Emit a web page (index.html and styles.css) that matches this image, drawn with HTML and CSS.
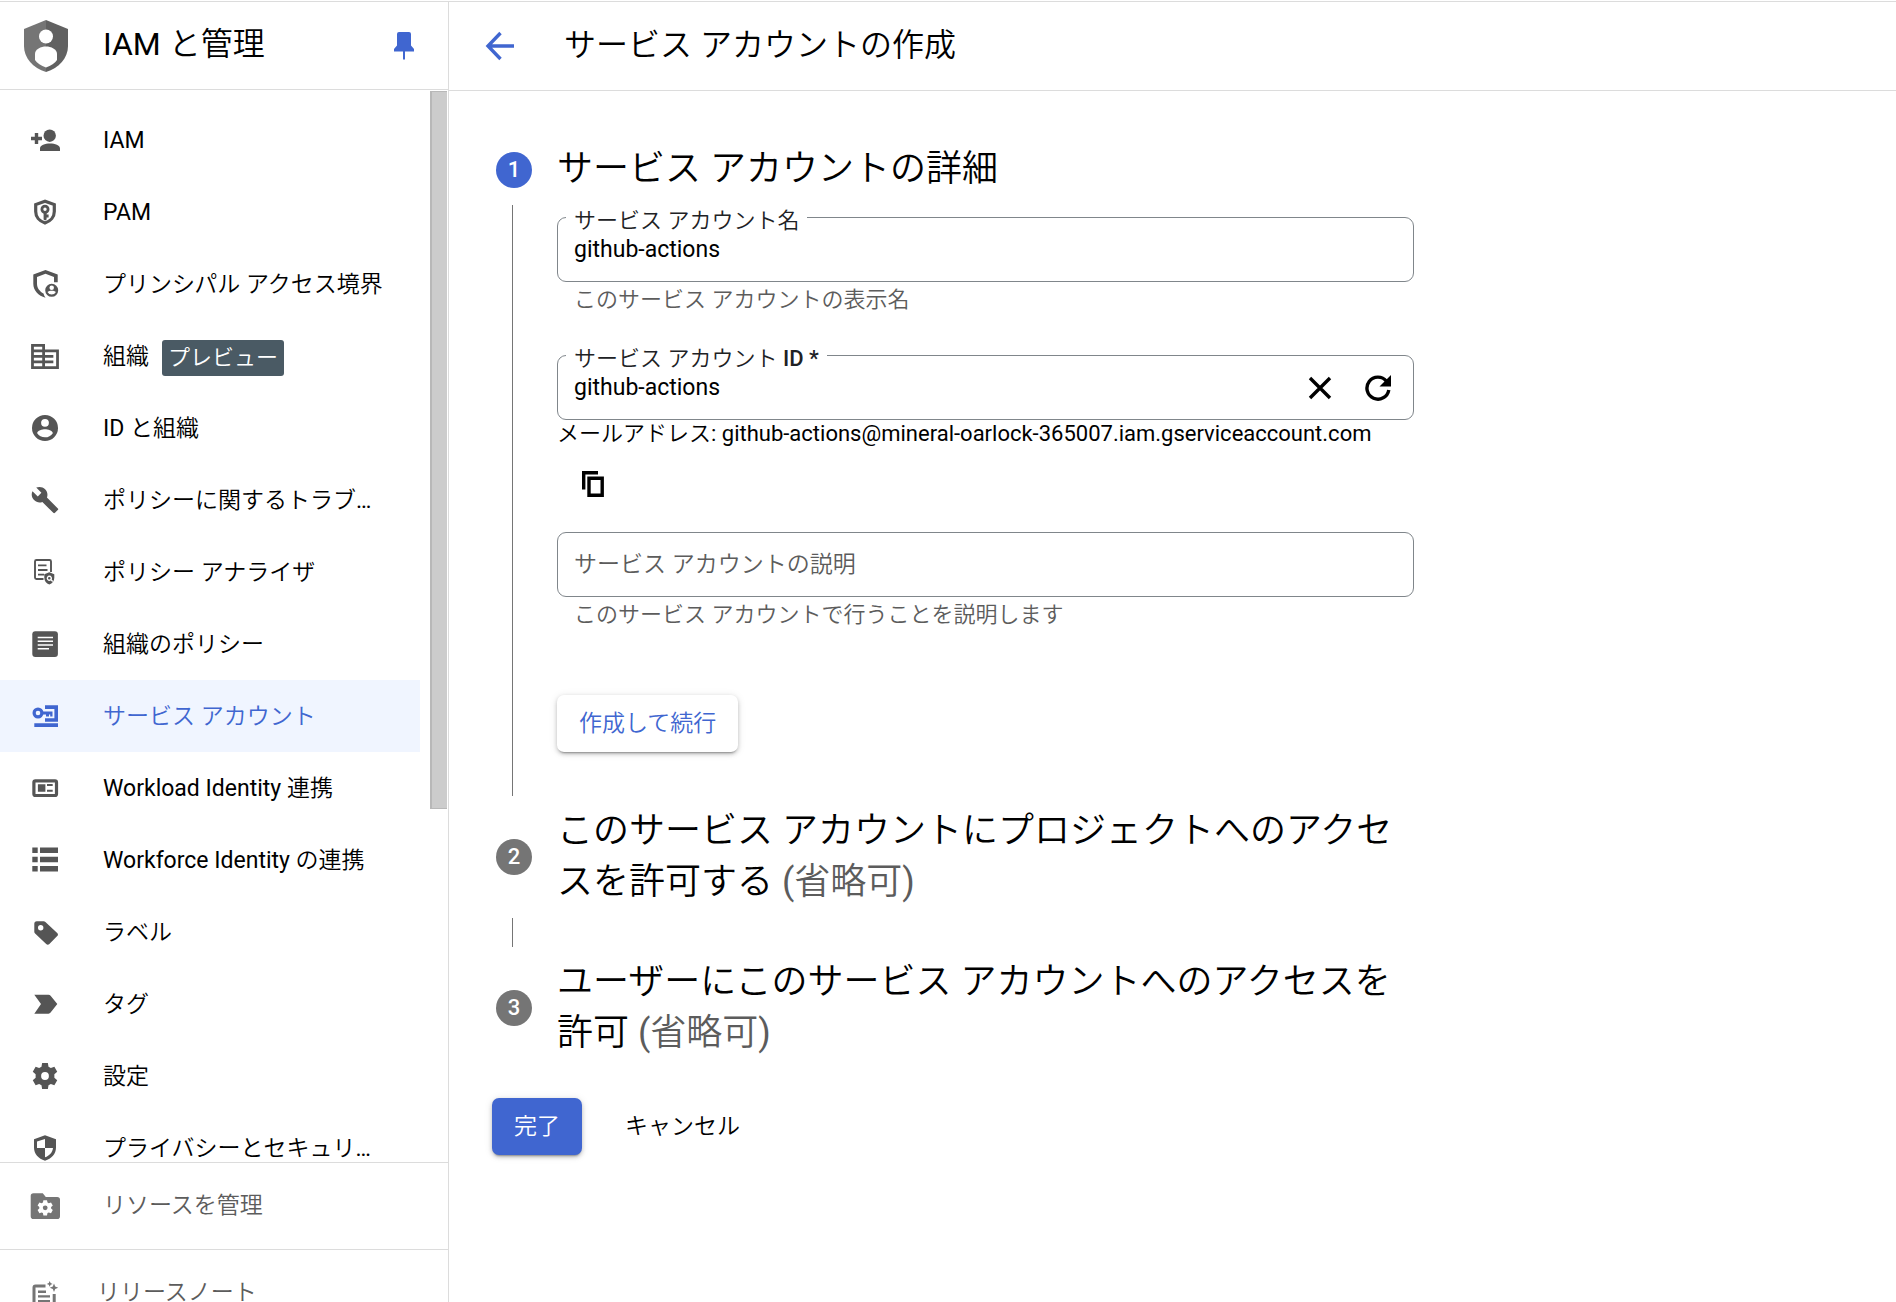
FILE: index.html
```html
<!DOCTYPE html>
<html lang="ja">
<head>
<meta charset="utf-8">
<meta name="viewport" content="width=device-width, initial-scale=1">
<title>サービス アカウントの作成</title>
<link rel="stylesheet" href="styles.css">
</head>
<body>
<div class="app">
  <aside class="sidebar">
    <div class="sidebar-header">
      <svg class="product-logo" viewBox="0 0 44 52" aria-hidden="true">
        <path fill="#757575" d="M22 0 0 9v17c0 12 9 22 22 26z"/>
        <path fill="#616161" d="M22 0l22 9v17c0 12-9 22-22 26z"/>
        <circle cx="22" cy="16.500" r="7" fill="#fff"/>
        <path fill="#fff" d="M11 34c0-5 6-7.500 11-7.500S33 29 33 34v6c-2 3-6 5.500-11 7.500-5-2-9-4.500-11-7.500z"/>
      </svg>
      <h2 class="product-name">IAM と管理</h2>
      <button class="icon-button pin" type="button" aria-label="固定">
        <svg width="20" height="28" viewBox="0 0 20 28"><path fill="currentColor" d="M5 0h10a2 2 0 0 1 2 2v11.500l3 3.500v2.500h-9V27l-1 1-1-1v-7.500H0V17l3-3.500V2a2 2 0 0 1 2-2z"/></svg>
      </button>
    </div>

    <div class="nav-area">
      <nav class="nav">
        <a class="nav-item" href="#"><svg class="icon" viewBox="0 0 32 32"><path d="M5.800 9h3.400v3.800H13v3.400H9.200V20H5.800v-3.800H2v-3.400h3.800zM11 27v-2.500c0-3.500 5-5 10-5s10 1.500 10 5V27z"/><circle cx="20.700" cy="11.700" r="6.200"/></svg><span class="nav-label">IAM</span></a>
        <a class="nav-item" href="#"><svg class="icon" viewBox="0 0 32 32"><path class="line" stroke-width="3.200" d="M16 5.200 6.700 8.600v7c0 5.200 3.600 9.700 9.300 11.400 5.700-1.700 9.300-6.200 9.300-11.400v-7z"/><circle class="line" cx="16" cy="13.300" r="3.100" stroke-width="2.800"/><path d="M14.600 16.500h3v2h2v3h-2v2l-1.500 1-1.500-1z"/></svg><span class="nav-label">PAM</span></a>
        <a class="nav-item" href="#"><svg class="icon" viewBox="0 0 32 32"><path d="M16.500 2 4.300 6.500v9.300c0 6.500 5 12 12.200 14-1-1.500-1.600-2.700-2-4.300C10.700 23.500 8 20 8 15.800V9l8.500-3.200L25 9v5.300h3.700V6.500z"/><path fill-rule="evenodd" d="M22.700 15.800a6.500 6.500 0 1 1 0 13 6.500 6.500 0 0 1 0-13zm0 1.800a2.200 2.200 0 1 0 0 4.500 2.200 2.200 0 0 0 0-4.500zm-4.200 6.500c1 1.700 2.500 2.500 4.200 2.500s3.200-.8 4.200-2.500c-1-1-2.500-1.400-4.200-1.400s-3.200.4-4.200 1.400z"/></svg><span class="nav-label">プリンシパル アクセス境界</span></a>
        <a class="nav-item" href="#"><svg class="icon" viewBox="0.500 0.200 23 23"><path d="M12 7V3H2v18h20V7H12zM10 19H4v-2h6v2zm0-4H4v-2h6v2zm0-4H4V9h6v2zm0-4H4V5h6v2zm10 12h-8v-2h2v-2h-2v-2h2v-2h-2V9h8v10zm-2-8h-4v2h4v-2zm0 4h-4v2h4v-2z"/></svg><span class="nav-label">組織</span><span class="badge">プレビュー</span></a>
        <a class="nav-item" href="#"><svg class="icon" viewBox="-0.300 -0.300 24.600 24.600"><path d="M12 2a10 10 0 1 0 0 20 10 10 0 0 0 0-20zm0 3a3 3 0 1 1 0 6 3 3 0 0 1 0-6zm0 14.200c-2.500 0-4.700-1.300-6-3.200 0-2 4-3.100 6-3.100s6 1.100 6 3.100a7.200 7.200 0 0 1-6 3.200z"/></svg><span class="nav-label">ID と組織</span></a>
        <a class="nav-item" href="#"><svg class="icon" viewBox="-1.300 -1.300 26.600 26.600"><path d="M22.700 19l-9.100-9.100c.9-2.300.4-5-1.500-6.900-2-2-5-2.400-7.400-1.300L9 6 6 9 1.600 4.700C.4 7.100.9 10.100 2.900 12.100c1.900 1.900 4.600 2.400 6.900 1.500l9.100 9.100c.4.400 1 .4 1.400 0l2.300-2.300c.5-.4.5-1.100.1-1.400z"/></svg><span class="nav-label">ポリシーに関するトラブルシューティング</span></a>
        <a class="nav-item" href="#"><svg class="icon" viewBox="0 0 32 32"><path class="line" stroke-width="1.900" d="M14.500 23H7.500A1.500 1.500 0 0 1 6 21.500v-16A1.500 1.500 0 0 1 7.500 4h13A1.500 1.500 0 0 1 22 5.500V16M9 9.400h8.500M9 14h9.500M9 18.600h6"/><path fill-rule="evenodd" d="m20.300 16.200 5 2v3.600c0 3.200-2 5.800-5 6.800-3-1-5-3.600-5-6.800v-3.600zm0 3.400a2.700 2.700 0 1 0 1.500 5l1.500 1.400.9-.9-1.500-1.500a2.700 2.700 0 0 0-2.400-4zm0 1.400a1.300 1.300 0 1 1 0 2.600 1.300 1.300 0 0 1 0-2.600z"/></svg><span class="nav-label">ポリシー アナライザ</span></a>
        <a class="nav-item" href="#"><svg class="icon" viewBox="0 0 32 32"><rect x="3.300" y="3.300" width="25.600" height="25.600" rx="3"/><path stroke="#fff" stroke-width="1.600" d="M8.700 9.500h15.300M8.700 13.300h15.300M8.700 17h15.300M8.700 20.800h11.300"/></svg><span class="nav-label">組織のポリシー</span></a>
        <a class="nav-item selected" href="#" aria-current="page"><svg class="icon" viewBox="0 0 32 32"><path d="M16 5.300h13v16.500H16v-3.600h9.400V9H16zM5.300 23.300H29V27H5.300z"/><circle class="line" cx="9" cy="13" r="3.900" stroke-width="3.200"/><path d="M12.500 11.400h11v5h-2.300v-1.800H20v1.800h-3v-1.800h-4.500z"/></svg><span class="nav-label">サービス アカウント</span></a>
        <a class="nav-item" href="#"><svg class="icon" viewBox="0 0 32 32"><rect class="line" x="4.900" y="8.900" width="22.600" height="14.600" rx="1.500" stroke-width="3.200"/><path d="M8.900 12.300h7.500v7.400H8.900zM18 12h5.700v1.900H18zM18 17.800h5.700v1.900H18z"/></svg><span class="nav-label">Workload Identity 連携</span></a>
        <a class="nav-item" href="#"><svg class="icon" viewBox="0 0 32 32"><path d="M3.300 3.600h5.400v5.400H3.300zM11 3.600h18v5.400H11zM3.300 12.800h5.400v5.400H3.300zM11 12.800h18v5.400H11zM3.300 22h5.400v5.400H3.300zM11 22h18v5.400H11z"/></svg><span class="nav-label">Workforce Identity の連携</span></a>
        <a class="nav-item" href="#"><svg class="icon" viewBox="0 0 32 32"><path fill-rule="evenodd" d="M7.800 5.300h6.800c.7 0 1.300.3 1.800.8l11.800 10.800c1 1 1 2.200 0 3.200l-7.800 7.800c-1 1-2.200 1-3.200 0L6.100 17.500c-.5-.5-.8-1.100-.8-1.800V7.800a2.500 2.500 0 0 1 2.500-2.500zM11.700 9a2.700 2.700 0 1 0 0 5.400 2.700 2.700 0 0 0 0-5.400z"/></svg><span class="nav-label">ラベル</span></a>
        <a class="nav-item" href="#"><svg class="icon" viewBox="0 0 32 32"><path d="M5.300 6.700h14.200c.9 0 1.600.4 2.100 1.100L28.300 16l-6.700 8.600c-.5.700-1.200 1.100-2.100 1.100H5.300L12 16z"/></svg><span class="nav-label">タグ</span></a>
        <a class="nav-item" href="#"><svg class="icon" viewBox="-0.300 -0.300 24.600 24.600"><path fill-rule="evenodd" d="M9.800 2h4.400l.5 2.900 1.800 1 2.700-1 2.200 3.800-2.200 1.900v2.800l2.200 1.900-2.200 3.800-2.700-1-1.800 1-.5 2.900H9.800l-.5-2.900-1.800-1-2.700 1-2.200-3.800 2.200-1.900v-2.800L2.600 8.700l2.200-3.800 2.700 1 1.800-1zM12 9a3 3 0 1 0 0 6 3 3 0 0 0 0-6z"/></svg><span class="nav-label">設定</span></a>
        <a class="nav-item" href="#"><svg class="icon" viewBox="0 0 32 32"><path fill-rule="evenodd" d="M16 3.300 5 7.200v8.300c0 6.200 4.400 11.300 11 13.200 6.600-1.900 11-7 11-13.200V7.200zm0 3.600v9.100h8c-.4 4.300-3.600 7.800-8 9.300V16H8V9.500z"/></svg><span class="nav-label">プライバシーとセキュリティ</span></a>
      </nav>
      <div class="scroll-track"><div class="scroll-thumb"></div></div>
    </div>

    <div class="sidebar-footer">
      <a class="footer-item" href="#"><svg class="icon" viewBox="0 0 32 32"><path d="M4.500 3.300h9.300l3 3.600h11.400A2.800 2.800 0 0 1 31 9.700v16.500a2.800 2.800 0 0 1-2.800 2.800H4.500a2.800 2.800 0 0 1-2.800-2.800V6.100a2.800 2.800 0 0 1 2.800-2.800z"/><path fill="#fff" fill-rule="evenodd" d="M14.400 10.200h3.600l.5 2.300 1.300.7 2.200-.8 1.800 3.100-1.700 1.500v1.600l1.700 1.500-1.800 3.100-2.200-.8-1.300.7-.5 2.300h-3.600l-.5-2.300-1.300-.7-2.200.8-1.800-3.100 1.700-1.500V17l-1.700-1.500 1.800-3.100 2.200.8 1.300-.7zm1.800 5.200a2.400 2.400 0 1 0 0 4.800 2.400 2.400 0 0 0 0-4.800z"/></svg><span>リソースを管理</span></a>
      <a class="footer-item release-notes" href="#"><svg class="icon" viewBox="0 0 32 32"><path class="line" stroke-width="3" d="M16.500 9H6.500A1.500 1.500 0 0 0 5 10.500V29M25.200 17v12"/><path d="M9 13.500h8v2.400H9zM9 18.200h12v2.400H9zM9 23h12v2.400H9zM20.700 4l.9 2 2 .9-2 .9-.9 2-.9-2-2-.9 2-.9zM25 6.500l1.200 3 3 1.200-3 1.200-1.200 3-1.200-3-3-1.200 3-1.200z"/></svg><span>リリースノート</span></a>
    </div>
  </aside>

  <main class="main">
    <header class="page-header">
      <a class="back" href="#" aria-label="戻る">
        <svg width="30" height="30" viewBox="0 0 30 30"><path fill="none" stroke="currentColor" stroke-width="3.400" d="M29 15H3.500M15.500 2 3 15l12.500 13"/></svg>
      </a>
      <h1 class="page-title">サービス アカウントの作成</h1>
    </header>

    <form class="form">
      <ol class="steps">
        <li class="step">
          <span class="step-number active">1</span>
          <h3 class="step-title">サービス アカウントの詳細</h3>
          <span class="step-line"></span>
          <div class="step-body">
            <div class="field">
              <label class="field-label" for="sa-name">サービス アカウント名</label>
              <input class="field-input" id="sa-name" type="text" value="github-actions">
            </div>
            <p class="hint">このサービス アカウントの表示名</p>

            <div class="field">
              <label class="field-label" for="sa-id">サービス アカウント ID *</label>
              <input class="field-input" id="sa-id" type="text" value="github-actions">
              <button class="field-action" type="button" aria-label="クリア">
                <svg width="24" height="24" viewBox="0 0 24 24"><path fill="none" stroke="currentColor" stroke-width="3.400" d="M2 2l20 20M22 2 2 22"/></svg>
              </button>
              <button class="field-action" type="button" aria-label="再生成">
                <svg width="26" height="26" viewBox="0 0 26 26"><path fill="none" stroke="currentColor" stroke-width="3.400" d="M21.500 6.200A11 11 0 1 0 23.800 15"/><path fill="currentColor" d="M26 0v11.500H14.500z"/></svg>
              </button>
            </div>
            <p class="email">メールアドレス: github-actions@mineral-oarlock-365007.iam.gserviceaccount.com</p>
            <button class="copy" type="button" aria-label="コピー">
              <svg width="22" height="26" viewBox="0 0 22 26"><path fill="none" stroke="currentColor" stroke-width="3.400" d="M1.700 18.500V1.700H16M7 7.200h13.200v17H7z"/></svg>
            </button>

            <div class="field">
              <input class="field-input" type="text" aria-label="サービス アカウントの説明" placeholder="サービス アカウントの説明">
            </div>
            <p class="hint">このサービス アカウントで行うことを説明します</p>

            <button class="button raised create" type="button">作成して続行</button>
          </div>
        </li>
        <li class="step">
          <span class="step-number">2</span>
          <h3 class="step-title">このサービス アカウントにプロジェクトへのアクセスを許可する <span class="optional">(省略可)</span></h3>
          <span class="step-line"></span>
        </li>
        <li class="step">
          <span class="step-number">3</span>
          <h3 class="step-title">ユーザーにこのサービス アカウントへのアクセスを許可 <span class="optional">(省略可)</span></h3>
        </li>
      </ol>
      <div class="actions">
        <button class="button raised primary" type="submit">完了</button>
        <button class="button" type="button">キャンセル</button>
      </div>
    </form>
  </main>
</div>
</body>
</html>
```

FILE: styles.css
```css
:root {
  --blue: #4066d0;
  --border: #dcdcdc;
  --outline: #80868b;
  --muted: #5c5c5c;
  --font: Roboto, "Noto Sans CJK JP DemiLight", "Noto Sans CJK JP Light", "Noto Sans CJK JP", sans-serif;
}

* {
  box-sizing: border-box;
}

body {
  margin: 0;
  font: 400 23px/28px var(--font);
  color: #000;
  background: #fff;
}

h1, h2, h3, p, ol {
  margin: 0;
  padding: 0;
  font-weight: 400;
}

button, input {
  font: inherit;
  color: inherit;
}

button {
  padding: 0;
  border: 0;
  background: none;
  cursor: pointer;
}

a {
  color: inherit;
  text-decoration: none;
}

svg {
  display: block;
}

.app {
  display: flex;
  height: 100vh;
  padding-top: 1px;
  overflow: hidden;
}

/* Sidebar */

.sidebar {
  display: flex;
  flex: none;
  flex-direction: column;
  width: 449px;
  border-top: 1px solid var(--border);
  border-right: 1px solid var(--border);
}

.sidebar-header {
  display: flex;
  flex: none;
  align-items: center;
  height: 88px;
  padding: 0 34px 0 24px;
  border-bottom: 1px solid var(--border);
}

.product-logo {
  width: 44px;
  height: 52px;
}

.product-name {
  flex: 1;
  padding: 0 0 3px 35px;
  font-size: 32px;
  line-height: 40px;
}

.pin {
  color: var(--blue);
}

.nav-area {
  display: flex;
  flex: 1;
  justify-content: space-between;
  min-height: 0;
  padding-right: 1px;
  overflow: hidden;
}

.nav {
  flex: none;
  width: 420px;
  padding-top: 14px;
}

.nav-item {
  display: flex;
  align-items: center;
  height: 72px;
  padding: 0 32px 0 29px;
}

.icon {
  flex: none;
  width: 32px;
  height: 32px;
  margin-right: 42px;
  fill: #555;
}

.icon .line {
  fill: none;
  stroke: #555;
}

.nav-label {
  padding-top: 2px;
  overflow: hidden;
  text-overflow: ellipsis;
  white-space: nowrap;
}

.selected {
  color: var(--blue);
  background: #f0f5ff;
}

.selected .icon {
  fill: var(--blue);
}

.selected .icon .line {
  stroke: var(--blue);
}

.badge {
  flex: none;
  margin: 4px 0 0 13px;
  padding: 0 6px;
  border-radius: 3px;
  font-size: 22px;
  line-height: 36px;
  color: #fff;
  background: #4a5a64;
}

.scroll-track {
  width: 17px;
  padding-top: 1px;
}

.scroll-thumb {
  height: 67%;
  border: solid #b8b8b8;
  border-width: 1px 0 1px 2px;
  background: #ccc;
}

/* The last footer row runs past the bottom of the window. */
.sidebar-footer {
  flex: none;
  margin-bottom: -34px;
  color: var(--muted);
}

.footer-item {
  display: flex;
  align-items: center;
  height: 87px;
  padding-left: 29px;
  border-top: 1px solid var(--border);
}

.footer-item .icon {
  fill: #757575;
}

.footer-item .icon .line {
  stroke: #757575;
}

.release-notes .icon {
  margin-right: 36px;
}

/* Main column */

.main {
  flex: 1;
  min-width: 0;
  border-top: 1px solid var(--border);
}

.page-header {
  display: flex;
  align-items: center;
  height: 89px;
  padding-left: 36px;
  border-bottom: 1px solid var(--border);
}

.back {
  color: var(--blue);
}

.page-title {
  padding: 0 0 3px 49px;
  font-size: 32px;
  line-height: 40px;
}

.form {
  max-width: 1008px;
  padding: 53px 43px 40px;
}

.steps {
  padding-left: 4px;
  list-style: none;
}

.step {
  display: grid;
  grid-template-columns: 36px minmax(0, 857px);
  column-gap: 25px;
}

.step-number {
  align-self: center;
  height: 36px;
  border-radius: 50%;
  font-size: 22px;
  font-weight: 500;
  line-height: 36px;
  text-align: center;
  color: #fff;
  background: #757575;
}

.step-number.active {
  background: var(--blue);
}

.step-title {
  font-size: 36px;
  line-height: 51px;
}

.optional {
  color: var(--muted);
}

.step-line {
  width: 1px;
  min-height: 29px;
  margin: 10px 16px;
  background: #757575;
}

.step-body {
  padding: 22px 0 54px;
}

.field {
  position: relative;
  display: flex;
  height: 65px;
  padding-right: 6px;
  border: 1px solid var(--outline);
  border-radius: 9px;
}

.field-label {
  position: absolute;
  top: -11px;
  left: 8px;
  padding: 0 8px;
  font-size: 22px;
  font-weight: 500;
  line-height: 28px;
  color: #202124;
  background: #fff;
}

.field-input {
  flex: 1;
  min-width: 0;
  padding: 0 16px;
  border: 0;
  border-radius: 9px;
  outline: 0;
  background: none;
}

.field-input::placeholder {
  color: var(--muted);
  opacity: 1;
}

.field-action {
  display: grid;
  place-items: center;
  width: 58px;
}

.hint {
  margin-bottom: 37px;
  padding-left: 17px;
  font-size: 22px;
  line-height: 36px;
  color: var(--muted);
}

.email {
  font-size: 22px;
}

.copy {
  display: grid;
  place-items: center;
  width: 72px;
  height: 72px;
  margin-bottom: 12px;
}

.button {
  height: 57px;
  padding: 0 22px;
  border-radius: 7px;
}

.raised {
  box-shadow: 0 3px 2px -2px rgba(0, 0, 0, .3), 0 2px 4px rgba(0, 0, 0, .2), 0 1px 8px rgba(0, 0, 0, .1);
}

.create {
  margin-top: 25px;
  color: var(--blue);
}

.primary {
  color: #fff;
  background: var(--blue);
}

.actions {
  display: flex;
  gap: 21px;
  margin-top: 39px;
}
```
